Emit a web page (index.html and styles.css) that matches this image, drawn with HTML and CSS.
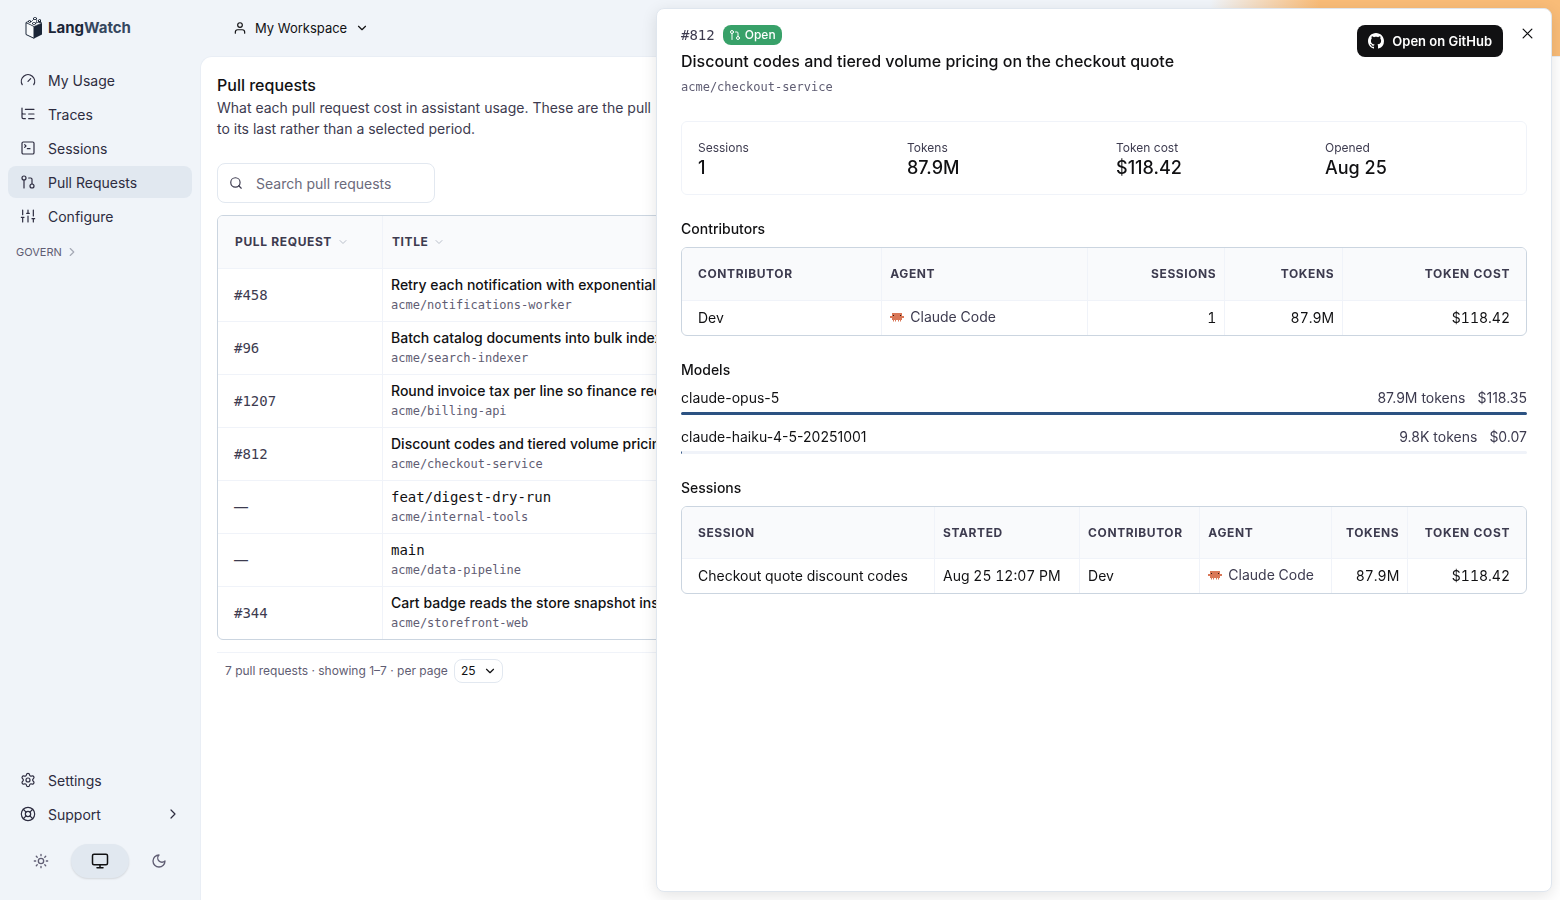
FILE: index.html
```html
<!DOCTYPE html>
<html lang="en">
<head>
<meta charset="utf-8">
<title>Pull requests - LangWatch</title>
<meta name="viewport" content="width=device-width, initial-scale=1">
<link rel="stylesheet" href="styles.css">
</head>
<body>
<svg class="defs" aria-hidden="true">
  <symbol id="i-gauge" viewBox="0 0 24 24"><path d="m12 14 4-4M3.34 19a10 10 0 1 1 17.32 0"/></symbol>
  <symbol id="i-tree" viewBox="0 0 24 24"><path d="M21 12h-8M21 5H8M21 19h-8M3 3v7c0 1.100.9 2 2 2h3M3 10v7c0 1.100.9 2 2 2h3"/></symbol>
  <symbol id="i-terminal" viewBox="0 0 24 24"><path d="m7 11 2-2-2-2M11 13h4"/><rect x="3" y="3" width="18" height="18" rx="2"/></symbol>
  <symbol id="i-pr" viewBox="0 0 24 24"><circle cx="18" cy="18" r="3"/><circle cx="6" cy="6" r="3"/><path d="M13 6h3a2 2 0 0 1 2 2v7M6 9v12"/></symbol>
  <symbol id="i-sliders" viewBox="0 0 24 24"><path d="M4 21v-7M4 10V3M12 21v-9M12 8V3M20 21v-5M20 12V3M2 14h4M10 8h4M18 16h4"/></symbol>
  <symbol id="i-settings" viewBox="0 0 24 24"><path d="M9.671 4.136a2.34 2.34 0 0 1 4.659 0 2.34 2.34 0 0 0 3.319 1.915 2.34 2.34 0 0 1 2.33 4.033 2.34 2.34 0 0 0 0 3.831 2.34 2.34 0 0 1-2.33 4.033 2.34 2.34 0 0 0-3.319 1.915 2.34 2.34 0 0 1-4.659 0 2.34 2.34 0 0 0-3.32-1.915 2.34 2.34 0 0 1-2.33-4.033 2.34 2.34 0 0 0 0-3.831A2.34 2.34 0 0 1 6.35 6.051a2.34 2.34 0 0 0 3.319-1.915"/><circle cx="12" cy="12" r="3"/></symbol>
  <symbol id="i-support" viewBox="0 0 24 24"><circle cx="12" cy="12" r="10"/><circle cx="12" cy="12" r="4"/><path d="m4.930 4.930 4.240 4.240M14.830 9.170l4.240-4.240M14.830 14.830l4.240 4.240M9.170 14.830l-4.240 4.240"/></symbol>
  <symbol id="i-right" viewBox="0 0 24 24"><path d="m9 18 6-6-6-6"/></symbol>
  <symbol id="i-down" viewBox="0 0 24 24"><path d="m6 9 6 6 6-6"/></symbol>
  <symbol id="i-user" viewBox="0 0 24 24"><path d="M20 21v-2a4 4 0 0 0-4-4H8a4 4 0 0 0-4 4v2"/><circle cx="12" cy="7" r="4"/></symbol>
  <symbol id="i-search" viewBox="0 0 24 24"><circle cx="11" cy="11" r="8"/><path d="m21 21-4.300-4.300"/></symbol>
  <symbol id="i-sun" viewBox="0 0 24 24"><circle cx="12" cy="12" r="4"/><path d="M12 2v2M12 20v2M4.930 4.930l1.410 1.410M17.660 17.660l1.410 1.410M2 12h2M20 12h2M6.340 17.660l-1.410 1.410M19.070 4.930l-1.410 1.410"/></symbol>
  <symbol id="i-monitor" viewBox="0 0 24 24"><rect x="2" y="3" width="20" height="14" rx="2"/><path d="M8 21h8M12 17v4"/></symbol>
  <symbol id="i-moon" viewBox="0 0 24 24"><path d="M12 3a6 6 0 0 0 9 9 9 9 0 1 1-9-9Z"/></symbol>
  <symbol id="i-close" viewBox="0 0 24 24"><path d="M19 5 5 19M5 5l14 14"/></symbol>
  <symbol id="i-github" viewBox="0 0 16 16"><path d="M8 0C3.580 0 0 3.580 0 8c0 3.540 2.290 6.530 5.470 7.590.4.070.55-.17.55-.38 0-.19-.01-.82-.01-1.490-2.010.37-2.530-.49-2.690-.94-.09-.23-.48-.94-.82-1.130-.28-.15-.68-.52-.01-.53.63-.01 1.080.58 1.230.82.72 1.210 1.870.87 2.330.66.07-.52.28-.87.51-1.070-1.780-.2-3.640-.89-3.640-3.950 0-.87.31-1.590.82-2.150-.08-.2-.36-1.020.08-2.120 0 0 .67-.21 2.200.82.64-.18 1.320-.27 2-.27s1.360.09 2 .27c1.530-1.040 2.200-.82 2.200-.82.44 1.100.16 1.920.08 2.120.51.56.82 1.270.82 2.150 0 3.070-1.870 3.750-3.650 3.950.29.25.54.73.54 1.480 0 1.070-.01 1.930-.01 2.200 0 .21.15.46.55.38A8.010 8.010 0 0 0 16 8c0-4.420-3.580-8-8-8z"/></symbol>
  <symbol id="i-claude" viewBox="0 0 14 14"><path fill="#d97757" d="M2 3h10v3h2v2h-2v2h-1v1h-1v-1H9v1H8v-1H6v1H5v-1H4v1H3v-1H2V8H0V6h2z"/><path fill="#d97757" opacity=".5" d="M3 11h1v1H3zM5 11h1v1H5zM8 11h1v1H8zM10 11h1v1h-1z"/><path fill="#2b1812" d="M3 5h1v1H3zM10 5h1v1h-1z"/></symbol>
</svg>

<div class="app">
  <aside class="sidebar">
    <a class="brand" href="#">
      <svg class="brand-mark" viewBox="0 0 18 22" aria-hidden="true">
        <path d="M1 5.500 9 9v12.300L1 17.500z" fill="#f8fafc" stroke="#1b2638" stroke-width="1"/>
        <path d="M9 9.500 17 6v11.500l-8 4z" fill="#1b2638"/>
        <path d="M1 5.500 4 4l2 1 3-3 3 1-1 3 3-1 3 1-8 3.500z" fill="#f8fafc" stroke="#1b2638" stroke-width=".7"/>
        <path d="m8 1 2-1 2 1v1l-2 1-2-1zM3 4l2-1 1 1v1L5 6 3 5zM13 3l2-1 1 1v2l-1 1-2-1zM7 6l2-1 2 1v1L9 8 7 7z" fill="#1b2638"/>
        <path d="M9 1h2v1H9zM4 4h1v1H4zM14 3h1v1h-1zM8 6h2v1H8z" fill="#f8fafc"/>
      </svg>
      <span class="brand-name">Lang<span>Watch</span></span>
    </a>
    <nav class="nav" aria-label="Main">
      <a class="nav-item" href="#"><svg class="icon"><use href="#i-gauge"/></svg>My Usage</a>
      <a class="nav-item" href="#"><svg class="icon"><use href="#i-tree"/></svg>Traces</a>
      <a class="nav-item" href="#"><svg class="icon"><use href="#i-terminal"/></svg>Sessions</a>
      <a class="nav-item active" href="#" aria-current="page"><svg class="icon"><use href="#i-pr"/></svg>Pull Requests</a>
      <a class="nav-item" href="#"><svg class="icon"><use href="#i-sliders"/></svg>Configure</a>
    </nav>
    <button class="nav-group" type="button">GOVERN<svg class="icon icon-md faint"><use href="#i-right"/></svg></button>
    <div class="nav nav-bottom">
      <a class="nav-item" href="#"><svg class="icon"><use href="#i-settings"/></svg>Settings</a>
      <button class="nav-item" type="button"><svg class="icon"><use href="#i-support"/></svg>Support<svg class="icon push"><use href="#i-right"/></svg></button>
    </div>
    <div class="themes" role="group" aria-label="Theme">
      <button type="button" aria-label="Light"><svg class="icon"><use href="#i-sun"/></svg></button>
      <button type="button" aria-label="System" class="on" aria-pressed="true"><svg class="icon icon-lg"><use href="#i-monitor"/></svg></button>
      <button type="button" aria-label="Dark"><svg class="icon"><use href="#i-moon"/></svg></button>
    </div>
  </aside>

  <div class="body">
    <header class="topbar">
      <button class="workspace" type="button"><svg class="icon icon-md"><use href="#i-user"/></svg>My Workspace<svg class="icon icon-md"><use href="#i-down"/></svg></button>
    </header>
    <main class="content">
      <h1>Pull requests</h1>
      <p class="lead">What each pull request cost in assistant usage. These are the pull<br>to its last rather than a selected period.</p>
      <label class="search">
        <svg class="icon icon-md"><use href="#i-search"/></svg>
        <input type="search" placeholder="Search pull requests" aria-label="Search pull requests">
      </label>
      <div class="table-box">
        <table class="pulls">
          <colgroup><col class="col-number"><col></colgroup>
          <thead><tr>
            <th><button type="button">Pull request<svg class="icon icon-sm"><use href="#i-down"/></svg></button></th>
            <th><button type="button">Title<svg class="icon icon-sm"><use href="#i-down"/></svg></button></th>
          </tr></thead>
          <tbody>
            <tr><td class="mono num">#458</td><td><span class="title">Retry each notification with exponential</span><span class="repo">acme/notifications-worker</span></td></tr>
            <tr><td class="mono num">#96</td><td><span class="title">Batch catalog documents into bulk index</span><span class="repo">acme/search-indexer</span></td></tr>
            <tr><td class="mono num">#1207</td><td><span class="title">Round invoice tax per line so finance rec</span><span class="repo">acme/billing-api</span></td></tr>
            <tr><td class="mono num">#812</td><td><span class="title">Discount codes and tiered volume pricing</span><span class="repo">acme/checkout-service</span></td></tr>
            <tr><td class="num">—</td><td><span class="title mono">feat/digest-dry-run</span><span class="repo">acme/internal-tools</span></td></tr>
            <tr><td class="num">—</td><td><span class="title mono">main</span><span class="repo">acme/data-pipeline</span></td></tr>
            <tr><td class="mono num">#344</td><td><span class="title">Cart badge reads the store snapshot inst</span><span class="repo">acme/storefront-web</span></td></tr>
          </tbody>
        </table>
      </div>
      <footer class="pager">
        <label for="per-page">7 pull requests · showing 1–7 · per page</label>
        <span class="select"><select id="per-page"><option>25</option><option>50</option></select><svg class="icon icon-md"><use href="#i-down"/></svg></span>
      </footer>
    </main>
  </div>
</div>

<section class="drawer" role="dialog" aria-labelledby="pr-title">
  <header class="drawer-head">
    <div class="drawer-title">
      <div class="id-line"><span class="mono num">#812</span><span class="badge"><svg class="icon icon-sm"><use href="#i-pr"/></svg>Open</span></div>
      <h2 id="pr-title">Discount codes and tiered volume pricing on the checkout quote</h2>
      <span class="repo">acme/checkout-service</span>
    </div>
    <div class="drawer-actions">
      <a class="github" href="#"><svg class="fill-icon"><use href="#i-github"/></svg>Open on GitHub</a>
      <button class="close" type="button" aria-label="Close"><svg class="icon"><use href="#i-close"/></svg></button>
    </div>
  </header>

  <dl class="stats">
    <div><dt>Sessions</dt><dd>1</dd></div>
    <div><dt>Tokens</dt><dd>87.9M</dd></div>
    <div><dt>Token cost</dt><dd>$118.42</dd></div>
    <div><dt>Opened</dt><dd>Aug 25</dd></div>
  </dl>

  <section class="block">
    <h3>Contributors</h3>
    <div class="table-box">
      <table>
        <thead><tr><th>Contributor</th><th>Agent</th><th class="right">Sessions</th><th class="right">Tokens</th><th class="right">Token cost</th></tr></thead>
        <tbody><tr><td>Dev</td><td><span class="agent"><svg class="agent-icon"><use href="#i-claude"/></svg>Claude Code</span></td><td class="right">1</td><td class="right">87.9M</td><td class="right">$118.42</td></tr></tbody>
      </table>
    </div>
  </section>

  <section class="block">
    <h3>Models</h3>
    <div class="models">
      <div class="model">
        <div class="model-line"><span>claude-opus-5</span><span class="usage"><span>87.9M tokens</span><span>$118.35</span></span></div>
        <div class="bar"><div class="bar-fill" style="width:100%"></div></div>
      </div>
      <div class="model">
        <div class="model-line"><span>claude-haiku-4-5-20251001</span><span class="usage"><span>9.8K tokens</span><span>$0.07</span></span></div>
        <div class="bar"><div class="bar-fill" style="width:0.06%"></div></div>
      </div>
    </div>
  </section>

  <section class="block">
    <h3>Sessions</h3>
    <div class="table-box">
      <table class="sessions">
        <thead><tr><th>Session</th><th>Started</th><th>Contributor</th><th>Agent</th><th class="right">Tokens</th><th class="right">Token cost</th></tr></thead>
        <tbody><tr><td>Checkout quote discount codes</td><td>Aug 25 12:07 PM</td><td>Dev</td><td><span class="agent"><svg class="agent-icon"><use href="#i-claude"/></svg>Claude Code</span></td><td class="right">87.9M</td><td class="right">$118.42</td></tr></tbody>
      </table>
    </div>
  </section>
</section>
</body>
</html>
```
FILE: styles.css
```css
:root {
  --bg: #f0f4f9;
  --bg-active: #e1e8f0;
  --panel: #ffffff;
  --head: #f9fafc;
  --line: #f0f3f9;
  --line-strong: #cbd5e0;
  --line-mid: #e2e8f0;
  --fg: #111113;
  --fg-soft: #3d3b4f;
  --fg-muted: #5f5d73;
  --blue: #2c5282;
  --green: #38a169;
}

* { box-sizing: border-box; }

body {
  margin: 0;
  color: var(--fg);
  background: var(--bg);
  font: 14px/20px Inter, "Liberation Sans", sans-serif;
}

h1, h2, h3, p, dl, dd { margin: 0; font-weight: 500; }
button, input, select { font: inherit; color: inherit; border: 0; background: none; padding: 0; }
a { color: inherit; text-decoration: none; }

.defs { display: none; }
.icon {
  width: 16px;
  height: 16px;
  flex: none;
  fill: none;
  stroke: currentColor;
  stroke-width: 2;
  stroke-linecap: round;
  stroke-linejoin: round;
}
.icon-sm { width: 12px; height: 12px; }
.icon-md { width: 14px; height: 14px; }
.icon-lg { width: 18px; height: 18px; }
.mono, .repo { font-family: "DejaVu Sans Mono", monospace; }

.app { display: flex; min-height: 100vh; }

.sidebar {
  width: 200px;
  flex: none;
  display: flex;
  flex-direction: column;
  padding: 0 8px 22px;
  color: #2d2c40;
}
.brand {
  display: flex;
  align-items: center;
  gap: 5px;
  height: 56px;
  margin-bottom: 8px;
  padding-left: 17px;
}
.brand-mark { width: 18px; height: 22px; }
.brand-name { font-size: 15px; font-weight: 700; color: #1b2638; }
.brand-name span { color: #35475f; }

.nav { display: flex; flex-direction: column; gap: 2px; }
.nav-item {
  display: flex;
  align-items: center;
  gap: 12px;
  height: 32px;
  padding: 2px 12px 0;
  border-radius: 8px;
}
.nav-item .icon { stroke-width: 1.8; margin-bottom: 2px; }
.nav-item.active { background: var(--bg-active); }
.nav-item .push { margin-left: auto; margin-right: -1px; }
.nav-group {
  display: flex;
  align-items: center;
  gap: 3px;
  height: 24px;
  margin-top: 8px;
  padding-left: 8px;
  font-size: 11px;
  color: var(--fg-muted);
}
.faint { stroke: #a5a9b5; }
.nav-bottom { margin-top: auto; }

.themes { display: flex; justify-content: space-between; margin-top: 14px; padding: 0 4px; }
.themes button {
  width: 58px;
  height: 34px;
  display: grid;
  place-items: center;
  border-radius: 17px;
  color: var(--fg-muted);
}
.themes .on { background: var(--bg-active); color: var(--fg); box-shadow: 0 1px 2px #0000001f; }

.body {
  flex: 1;
  min-width: 0;
  display: flex;
  flex-direction: column;
  background: linear-gradient(90deg, #f9bc7800 1010px, #f9bc78 1120px) no-repeat;
}
.topbar { height: 56px; flex: none; display: flex; align-items: center; padding-left: 33px; }
.workspace { display: flex; align-items: center; gap: 8px; font-size: 13px; }

.content {
  flex: 1;
  padding: 16px;
  background: var(--panel);
  border: 1px solid #e9eef5;
  border-width: 1px 0 0 1px;
  border-top-left-radius: 12px;
}
h1 { font-size: 16px; line-height: 24px; }
.lead { color: var(--fg-soft); line-height: 21px; font-weight: 400; }
.search {
  width: 218px;
  height: 40px;
  display: flex;
  align-items: center;
  gap: 13px;
  margin: 24px 0 12px;
  padding: 0 11px;
  border: 1px solid var(--line-mid);
  border-radius: 8px;
  color: var(--fg-soft);
}
.search input { width: 100%; min-width: 0; padding-top: 2px; outline: 0; }
.search input::placeholder { color: #6b6a7b; opacity: 1; }

.table-box { border: 1px solid var(--line-strong); border-radius: 6px; overflow: hidden; }
table { width: 100%; border-collapse: separate; border-spacing: 0; font-variant-numeric: tabular-nums; }
th {
  height: 53px;
  padding: 0 8px;
  text-align: left;
  font-size: 12px;
  font-weight: 700;
  line-height: 16px;
  letter-spacing: 0.05em;
  text-transform: uppercase;
  color: var(--fg-soft);
  background: var(--head);
  border-bottom: 1px solid var(--line);
}
td { height: 34px; padding: 0 8px; white-space: nowrap; }
th:not(:last-child), td:not(:last-child) { border-right: 1px solid var(--line); }
th:first-child, td:first-child { padding-left: 16px; }
th:last-child, td:last-child { padding-right: 16px; }
.right { text-align: right; }

.sessions th { height: 52px; }

.pulls { table-layout: fixed; }
.pulls td { height: 53px; }
.pulls tbody tr:not(:last-child) td { border-bottom: 1px solid var(--line); }
.pulls tbody tr:last-child td { height: 52px; }
.col-number { width: 165px; }
th button {
  display: flex;
  align-items: center;
  gap: 5px;
  padding-left: 1px;
  text-transform: inherit;
  letter-spacing: inherit;
}
th button .icon { stroke: #b9bfca; }
.num { color: var(--fg-soft); }
.title { display: block; font-weight: 500; line-height: 20px; }
.title.mono { font-weight: 400; }
.repo { display: block; font-size: 12px; line-height: 20px; color: var(--fg-muted); }

.pager {
  display: flex;
  align-items: center;
  gap: 6px;
  margin-top: 12px;
  padding: 6px 8px;
  border-top: 1px solid var(--line);
  font-size: 12px;
  color: var(--fg-muted);
}
.select { display: grid; align-items: center; color: var(--fg); }
.select select {
  grid-area: 1 / 1;
  appearance: none;
  width: 49px;
  height: 24px;
  padding-left: 6px;
  border: 1px solid var(--line-mid);
  border-radius: 8px;
}
.select .icon { grid-area: 1 / 1; justify-self: end; margin-right: 6px; pointer-events: none; }

.drawer {
  position: fixed;
  top: 8px;
  right: 8px;
  bottom: 8px;
  width: min(896px, calc(100% - 16px));
  padding: 16px 24px;
  overflow: auto;
  background: var(--panel);
  border: 1px solid #dfe6ee;
  border-radius: 8px;
  box-shadow: 0 4px 16px #0000001c;
}
.drawer-head { display: flex; justify-content: space-between; }
.id-line { display: flex; align-items: center; gap: 8px; }
.badge {
  display: flex;
  align-items: center;
  gap: 4px;
  height: 20px;
  padding: 0 6px;
  border-radius: 8px;
  font-size: 12px;
  font-weight: 500;
  color: #fff;
  background: var(--green);
}
h2 { margin: 4px 0; font-size: 16px; line-height: 24px; }
.drawer-actions { display: flex; align-items: flex-start; gap: 8px; }
.github {
  display: flex;
  align-items: center;
  gap: 8px;
  height: 32px;
  padding: 0 11px;
  border-radius: 8px;
  font-size: 13px;
  font-weight: 600;
  color: #fff;
  background: var(--fg);
}
.fill-icon { width: 16px; height: 16px; fill: currentColor; }
.close { display: grid; place-items: center; width: 32px; height: 16px; margin-right: -16px; }
.close .icon { width: 15px; height: 15px; }

.stats {
  display: grid;
  grid-template-columns: repeat(4, 1fr);
  gap: 24px;
  margin: 24px 0;
  padding: 16px;
  border: 1px solid var(--line);
  border-radius: 6px;
}
dt { font-size: 12px; line-height: 20px; color: var(--fg-soft); }
dd { font-size: 18px; line-height: 20px; }
dl { font-weight: 400; }

.block { margin-bottom: 24px; }
h3 { font-size: 14px; line-height: 20px; margin-bottom: 8px; }
.agent { display: flex; align-items: center; gap: 6px; padding-bottom: 2px; color: var(--fg-soft); }
.agent-icon { width: 14px; height: 14px; }
.models { display: grid; gap: 12px; }
.model { display: grid; gap: 4px; }
.model-line { display: flex; justify-content: space-between; }
.usage { display: flex; gap: 12px; color: var(--fg-soft); }
.bar { height: 3px; border-radius: 2px; background: var(--line); overflow: hidden; }
.bar-fill { height: 100%; min-width: 1px; background: var(--blue); }
```
